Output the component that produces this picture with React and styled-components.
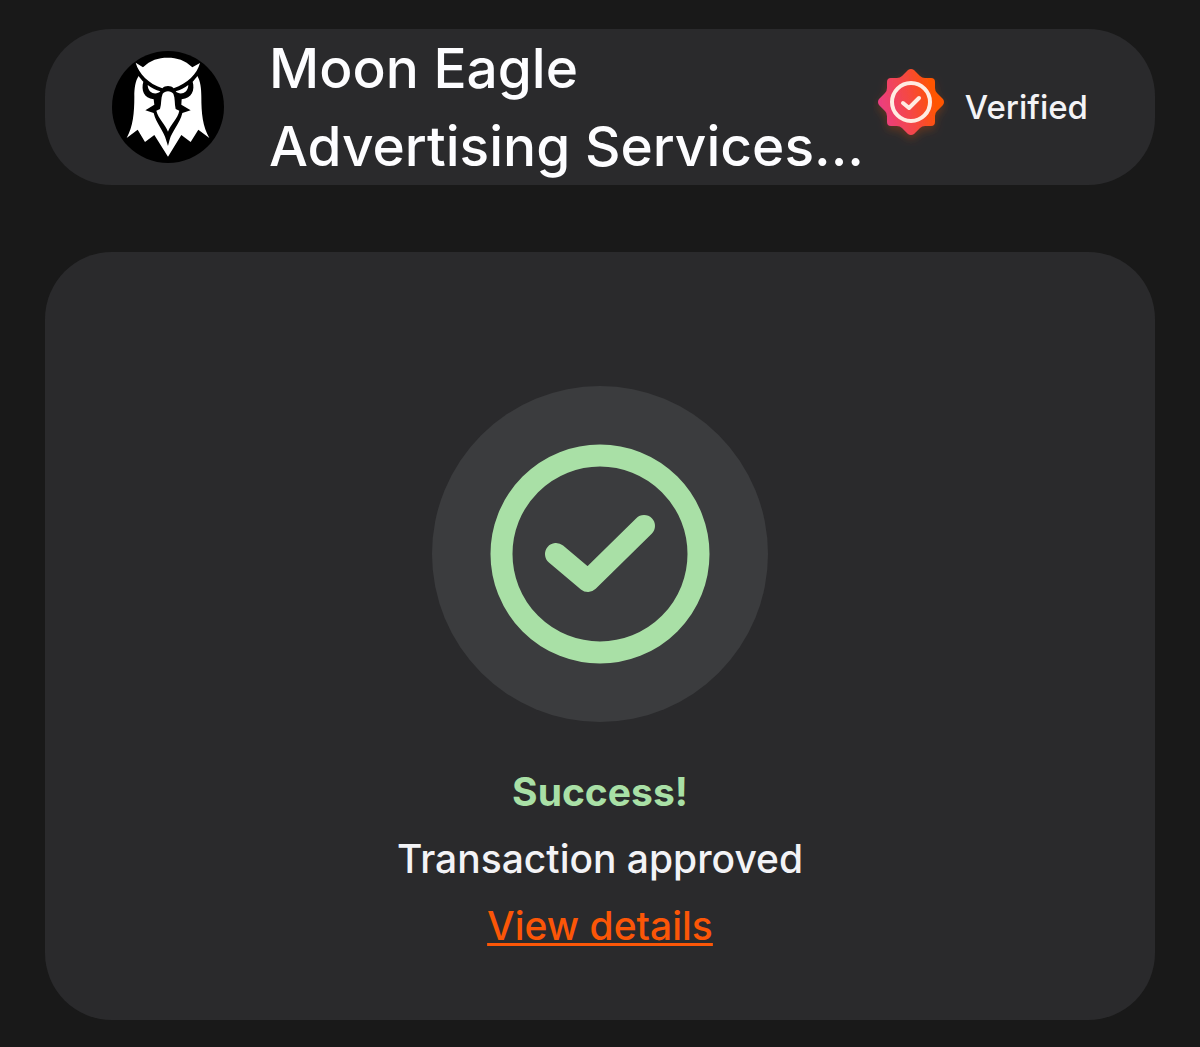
import styled, { createGlobalStyle } from 'styled-components';

const colours = {
  page: '#191919',
  card: '#2a2a2c',
  disc: '#3b3c3e',
  text: '#f3f3f6',
  success: '#a9e0a6',
  link: '#fb5607',
};

const GlobalStyle = createGlobalStyle`
  *, *::before, *::after {
    box-sizing: border-box;
  }

  body {
    margin: 0;
    min-height: 100vh;
    background: ${colours.page};
    color: ${colours.text};
    font-family: Inter, "Liberation Sans", sans-serif;
  }
`;

const Page = styled.main`
  display: flex;
  flex-direction: column;
  gap: 67px;
  padding: 29px 45px 27px;
`;

const Card = styled.section`
  background: ${colours.card};
  border-radius: 67px;
`;

const AccountCard = styled(Card)`
  display: flex;
  align-items: center;
  padding: 0 67px;
`;

const AccountName = styled.h1`
  flex: 1;
  min-width: 0;
  margin: 0 0 0 45px;
  color: #fdfdff;
  font-size: 55px;
  font-weight: 500;
  line-height: 78px;
`;

const Verified = styled.div`
  display: flex;
  align-items: center;
  gap: 15px;
  font-size: 33px;
  font-weight: 500;
  line-height: 44px;
`;

const StatusCard = styled(Card)`
  display: flex;
  flex-direction: column;
  align-items: center;
  padding: 134px 67px 61px;
`;

const Disc = styled.div`
  display: flex;
  align-items: center;
  justify-content: center;
  width: 336px;
  height: 336px;
  margin-bottom: 36px;
  border-radius: 50%;
  background: ${colours.disc};
`;

const StatusLine = styled.p`
  margin: 0;
  color: ${({ $success }) => ($success ? colours.success : colours.text)};
  font-size: 39px;
  font-weight: ${({ $success }) => ($success ? 700 : 500)};
  line-height: 67px;
`;

const DetailsLink = styled.a`
  color: ${colours.link};
  text-decoration-thickness: 3px;
  text-underline-offset: 3px;
  text-decoration-skip-ink: none;
`;

function EagleAvatar() {
  return (
    <svg width="112" height="112" viewBox="35 33 336 336" aria-hidden="true">
      <circle cx="203" cy="201" r="168" fill="#000" />
      <path
        fill="#fff"
        d="M106 68 L128 82 C150 60 174 53 202 53 C230 53 254 60 276 82 L299 69
          C290 102 262 130 220 145 C212 136 194 136 186 145 C144 130 116 102 106 68 Z"
      />
      <path
        fill="#fff"
        d="M115 108 C120 115 124 120 129 125 C122 150 130 174 160 178 L162 194
          L135 211 L160 219 C168 252 190 270 198 302 L203 318 L207 302
          C216 270 238 252 246 219 L271 211 L243 194 L244 178
          C275 174 284 150 277 125 C282 120 286 115 291 108
          C300 122 303 145 303 170 C303 220 307 258 327 294
          L294 269 L271 306 L243 285 L203 350 L162 285 L134 306 L112 269 L79 294
          C98 258 102 220 102 170 C102 145 105 122 115 108 Z"
      />
      <path
        fill="#fff"
        d="M187 161 C194 151 212 151 219 161 C225 175 222 190 226 207 L237 212
          C232 237 211 252 203 275 C195 252 174 237 168 212 L179 207 C184 190 181 175 187 161 Z"
      />
      <path fill="#fff" d="M142 135 C153 144 166 150 180 154 C170 165 143 163 142 135 Z" />
      <path fill="#fff" d="M264 135 C253 144 240 150 226 154 C236 165 263 163 264 135 Z" />
    </svg>
  );
}

function VerifiedBadge() {
  return (
    <svg width="77" height="77" viewBox="0 1 77 77" aria-hidden="true">
      <defs>
        <linearGradient id="badgeFill" gradientUnits="userSpaceOnUse" x1="6" y1="42" x2="71" y2="26">
          <stop offset="0" stopColor="#ea3d84" />
          <stop offset="0.5" stopColor="#f6483f" />
          <stop offset="0.85" stopColor="#ff5500" />
        </linearGradient>
        <filter id="badgeGlow" x="-30%" y="-30%" width="160%" height="160%">
          <feDropShadow dx="0" dy="4" stdDeviation="4" floodColor="#ff5500" floodOpacity="0.25" />
        </filter>
      </defs>
      <path
        filter="url(#badgeGlow)"
        fill="url(#badgeFill)"
        d="M35 2 Q38 0 41 2 L47 8 Q49 10 52 10 H58 Q62 10 62 14 V20 Q62 23 64 25
          L70 31 Q72 34 70 37 L64 43 Q62 45 62 48 V54 Q62 58 58 58 H52 Q49 58 47 60
          L41 66 Q38 68 35 66 L29 60 Q27 58 24 58 H18 Q14 58 14 54 V48 Q14 45 12 43
          L6 37 Q4 34 6 31 L12 25 Q14 23 14 20 V14 Q14 10 18 10 H24 Q27 10 29 8 Z"
      />
      <circle cx="38" cy="34" r="19" fill="none" stroke="#ffece2" strokeWidth="4" />
      <path
        d="M30 35 L36 40 L46 30"
        fill="none"
        stroke="#ffece2"
        strokeWidth="4"
        strokeLinecap="round"
        strokeLinejoin="round"
      />
    </svg>
  );
}

function SuccessIcon() {
  return (
    <svg
      width="220"
      height="220"
      viewBox="0 0 220 220"
      fill="none"
      stroke={colours.success}
      strokeWidth="22"
      strokeLinecap="round"
      strokeLinejoin="round"
      aria-hidden="true"
    >
      <circle cx="110" cy="110" r="98.5" />
      <path d="M66 110 L98 137 L154 82" />
    </svg>
  );
}

export default function App() {
  return (
    <>
      <GlobalStyle />
      <Page>
        <AccountCard as="header">
          <EagleAvatar />
          <AccountName>Moon Eagle Advertising Services...</AccountName>
          <Verified>
            <VerifiedBadge />
            <span>Verified</span>
          </Verified>
        </AccountCard>
        <StatusCard>
          <Disc>
            <SuccessIcon />
          </Disc>
          <StatusLine $success>Success!</StatusLine>
          <StatusLine>Transaction approved</StatusLine>
          <StatusLine>
            <DetailsLink href="#details">View details</DetailsLink>
          </StatusLine>
        </StatusCard>
      </Page>
    </>
  );
}
